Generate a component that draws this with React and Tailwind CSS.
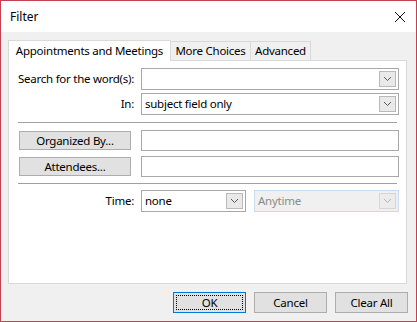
const Chevron = ({ disabled }) => (
  <svg width="9" height="6" viewBox="0 0 9 6" className="block">
    <path
      d="M1 1 L4.5 4.5 L8 1"
      fill="none"
      stroke={disabled ? "#b5b5b5" : "#5a5a5a"}
      strokeWidth="1"
    />
  </svg>
);

const Combo = ({ value, width, disabled }) => (
  <div
    className={`flex items-center h-[22px] border ${
      disabled ? "border-[#c7dcee] bg-[#f0f0f0] text-[#8a8a8a]" : "border-[#a8a8a8] bg-white text-black"
    }`}
    style={{ width }}
  >
    <span className="flex-1 pl-[3px] whitespace-nowrap overflow-hidden">{value}</span>
    <div
      className={`w-[17px] h-[16px] mr-[2px] flex items-center justify-center border ${
        disabled ? "border-[#d6d6d6] bg-[#ececec]" : "border-[#b9b9b9] bg-[#e9e9e9]"
      }`}
    >
      <Chevron disabled={disabled} />
    </div>
  </div>
);

const TextBox = () => <div className="w-[258px] h-[21px] border border-[#a8a8a8] bg-white" />;

const Label = ({ children }) => (
  <span className="w-[123px] text-right pr-[7px] whitespace-nowrap">{children}</span>
);

const SideButton = ({ label }) => (
  <button className="w-[112px] h-[19px] ml-[1px] mr-[10px] border border-[#adadad] bg-[#e1e1e1] text-black leading-none whitespace-nowrap">
    {label}
  </button>
);

const DialogButton = ({ label, focused }) => (
  <button
    className={`w-[73px] h-[21px] border bg-[#e1e1e1] text-black leading-none flex items-center justify-center whitespace-nowrap ${
      focused ? "border-[#0078d7]" : "border-[#adadad]"
    }`}
  >
    {focused ? (
      <span className="w-[67px] h-[15px] border border-dotted border-black flex items-center justify-center">
        {label}
      </span>
    ) : (
      label
    )}
  </button>
);

export default function App() {
  return (
    <div
      className="w-[417px] h-[322px] border border-[#c4404f] bg-[#f0f0f0] flex flex-col text-[11.5px] tracking-[-0.25px] text-black"
      style={{ fontFamily: "'Noto Sans', sans-serif" }}
    >
      {/* title bar */}
      <div className="h-[31px] bg-white flex items-center justify-between pl-[9px] pr-[8px]">
        <span className="text-[12px] tracking-normal">Filter</span>
        <svg width="12" height="12" viewBox="0 0 12 12" className="mr-[2px]">
          <path d="M1 1 L11 11 M11 1 L1 11" stroke="#111" strokeWidth="1" />
        </svg>
      </div>

      <div className="flex-1 flex flex-col pl-[7px] pr-[8px] pt-[7px]">
        {/* tabs */}
        <div className="flex items-end h-[21px] relative z-10">
          <div className="h-[21px] w-[163px] bg-white border border-b-0 border-[#d9d9d9] flex items-center justify-center -mb-[1px] pb-[1px] whitespace-nowrap">
            Appointments and Meetings
          </div>
          <div className="h-[19px] w-[80px] border border-l-0 border-b-0 border-[#d9d9d9] flex items-center justify-center whitespace-nowrap">
            More Choices
          </div>
          <div className="h-[19px] w-[60px] border border-l-0 border-b-0 border-[#d9d9d9] flex items-center justify-center whitespace-nowrap">
            Advanced
          </div>
        </div>

        {/* panel */}
        <div className="w-[399px] h-[224px] bg-white border border-[#d9d9d9] pl-[9px] pt-[7px]">
          <div className="flex items-center h-[22px]">
            <Label>Search for the word(s):</Label>
            <Combo value="" width={258} />
          </div>
          <div className="flex items-center h-[22px] mt-[3px]">
            <Label>In:</Label>
            <Combo value="subject field only" width={258} />
          </div>
          <div className="w-[379px] h-px bg-[#a0a0a0] mt-[7px]" />

          <div className="flex items-center h-[21px] mt-[7px]">
            <SideButton label="Organized By..." />
            <TextBox />
          </div>
          <div className="flex items-center h-[21px] mt-[5px]">
            <SideButton label="Attendees..." />
            <TextBox />
          </div>
          <div className="w-[379px] h-px bg-[#a0a0a0] mt-[6px]" />

          <div className="flex items-center h-[21px] mt-[6px]">
            <Label>Time:</Label>
            <Combo value="none" width={105} />
            <div className="w-[8px]" />
            <Combo value="Anytime" width={145} disabled />
          </div>
        </div>

        {/* buttons */}
        <div className="flex justify-end gap-[8px] mt-[8px]">
          <DialogButton label="OK" focused />
          <DialogButton label="Cancel" />
          <DialogButton label="Clear All" />
        </div>
      </div>
    </div>
  );
}
